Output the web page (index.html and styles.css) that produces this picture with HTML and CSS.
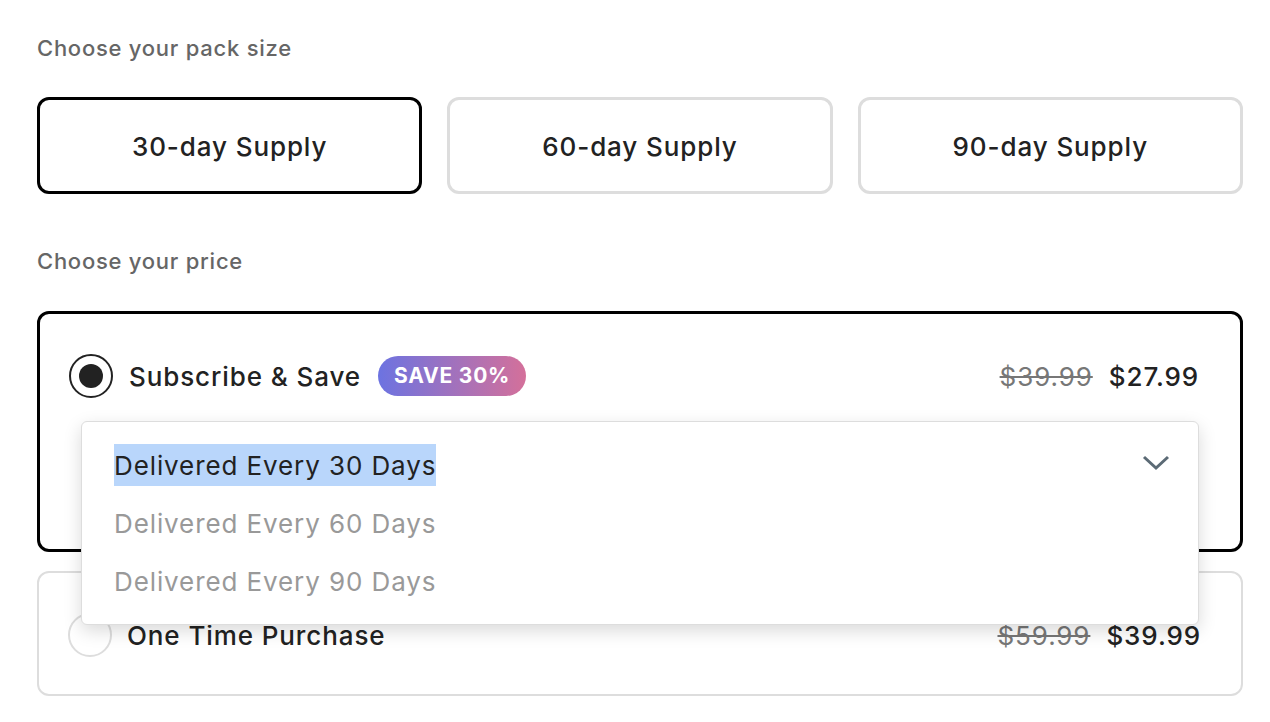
FILE: index.html
```html
<!DOCTYPE html>
<html lang="en">
<head>
    <meta charset="UTF-8">
    <meta name="viewport" content="width=device-width, initial-scale=1.0">
    <title>Choose your pack</title>
    <link rel="stylesheet" href="styles.css">
</head>
<body>
    <div class="container">
        <div class="label">Choose your pack size</div>
        <div class="packs">
            <button class="pack selected">30-day Supply</button>
            <button class="pack">60-day Supply</button>
            <button class="pack">90-day Supply</button>
        </div>

        <div class="label price-label">Choose your price</div>

        <div class="plan selected">
            <div class="plan-row">
                <span class="radio checked"></span>
                <span class="plan-name">Subscribe &amp; Save</span>
                <span class="badge">SAVE 30%</span>
                <span class="prices">
                    <s class="old">$39.99</s>
                    <span class="new">$27.99</span>
                </span>
            </div>
            <div class="select">
                <!-- open dropdown list drawn over the closed select -->
                <div class="dropdown">
                    <div class="option"><span class="active">Delivered Every 30 Days</span></div>
                    <div class="option muted">Delivered Every 60 Days</div>
                    <div class="option muted">Delivered Every 90 Days</div>
                    <svg class="chevron" width="28" height="16" viewBox="0 0 28 16">
                        <path d="M2 2 L14 13 L26 2" fill="none" stroke="#5b6a75" stroke-width="3"/>
                    </svg>
                </div>
            </div>
        </div>

        <div class="plan">
            <div class="plan-row">
                <span class="radio"></span>
                <span class="plan-name">One Time Purchase</span>
                <span class="prices">
                    <s class="old">$59.99</s>
                    <span class="new">$39.99</span>
                </span>
            </div>
        </div>
    </div>
</body>
</html>
```

FILE: styles.css
```css
body {
    font-family: Inter, "Noto Sans", sans-serif;
    letter-spacing: 0.9px;
    background-color: #fff;
    color: #222;
    margin: 0;
}
.container {
    width: 1206px;
    padding: 35px 0 0 37px;
}
.label {
    font-size: 22px;
    line-height: 26px;
    font-weight: 500;
    letter-spacing: 0.75px;
    color: #666;
}
.price-label {
    margin-top: 54px;
}
.packs {
    display: flex;
    gap: 25px;
    margin-top: 36px;
}
.pack {
    flex: 1;
    height: 97px;
    background-color: #fff;
    border: 3px solid #ddd;
    border-radius: 12px;
    font-family: inherit;
    letter-spacing: inherit;
    font-size: 26px;
    font-weight: 500;
    color: #222;
    padding-top: 2px;
    cursor: pointer;
}
.pack.selected {
    border-color: #000;
}
.plan {
    margin-top: 19px;
    border: 2px solid #ddd;
    border-radius: 12px;
    padding: 40px 40px 37px 29px;
}
.plan.selected {
    margin-top: 37px;
    border: 3px solid #000;
    padding: 40px 41px 40px 29px;
}
.plan-row {
    display: flex;
    align-items: center;
    height: 44px;
    font-size: 26px;
    font-weight: 500;
}
.radio {
    width: 40px;
    height: 40px;
    border: 2px solid #ddd;
    border-radius: 50%;
    display: flex;
    align-items: center;
    justify-content: center;
    margin-right: 15px;
}
.radio.checked {
    border-color: #222;
    margin-right: 16px;
}
.radio.checked::after {
    content: "";
    width: 24px;
    height: 24px;
    border-radius: 50%;
    background-color: #222;
}
.badge {
    margin-left: 17px;
    height: 40px;
    line-height: 40px;
    padding: 0 16px;
    border-radius: 20px;
    background: linear-gradient(90deg, #6c73e1, #d4709a);
    color: #fff;
    font-size: 21px;
    font-weight: 700;
    letter-spacing: 0.8px;
}
.prices {
    margin-left: auto;
    display: flex;
    gap: 16px;
}
.old {
    color: #777;
    font-weight: 400;
}
.select {
    position: relative;
    height: 88px;
    margin: 23px 0 0 12px;
}
.dropdown {
    position: absolute;
    top: 0;
    left: 0;
    right: 0;
    z-index: 2;
    background-color: #fff;
    border: 1px solid #ddd;
    border-radius: 6px;
    box-shadow: 0 6px 18px rgba(0, 0, 0, 0.15);
    padding: 22px 32px;
    font-size: 26px;
}
.option {
    height: 42px;
    line-height: 44px;
    margin-bottom: 16px;
}
.option:last-of-type {
    margin-bottom: 0;
}
.option .active {
    display: inline-block;
    height: 42px;
    background-color: #b9d6fb;
    color: #222;
}
.muted {
    color: #999;
}
.chevron {
    position: absolute;
    top: 33px;
    right: 28px;
}
```
